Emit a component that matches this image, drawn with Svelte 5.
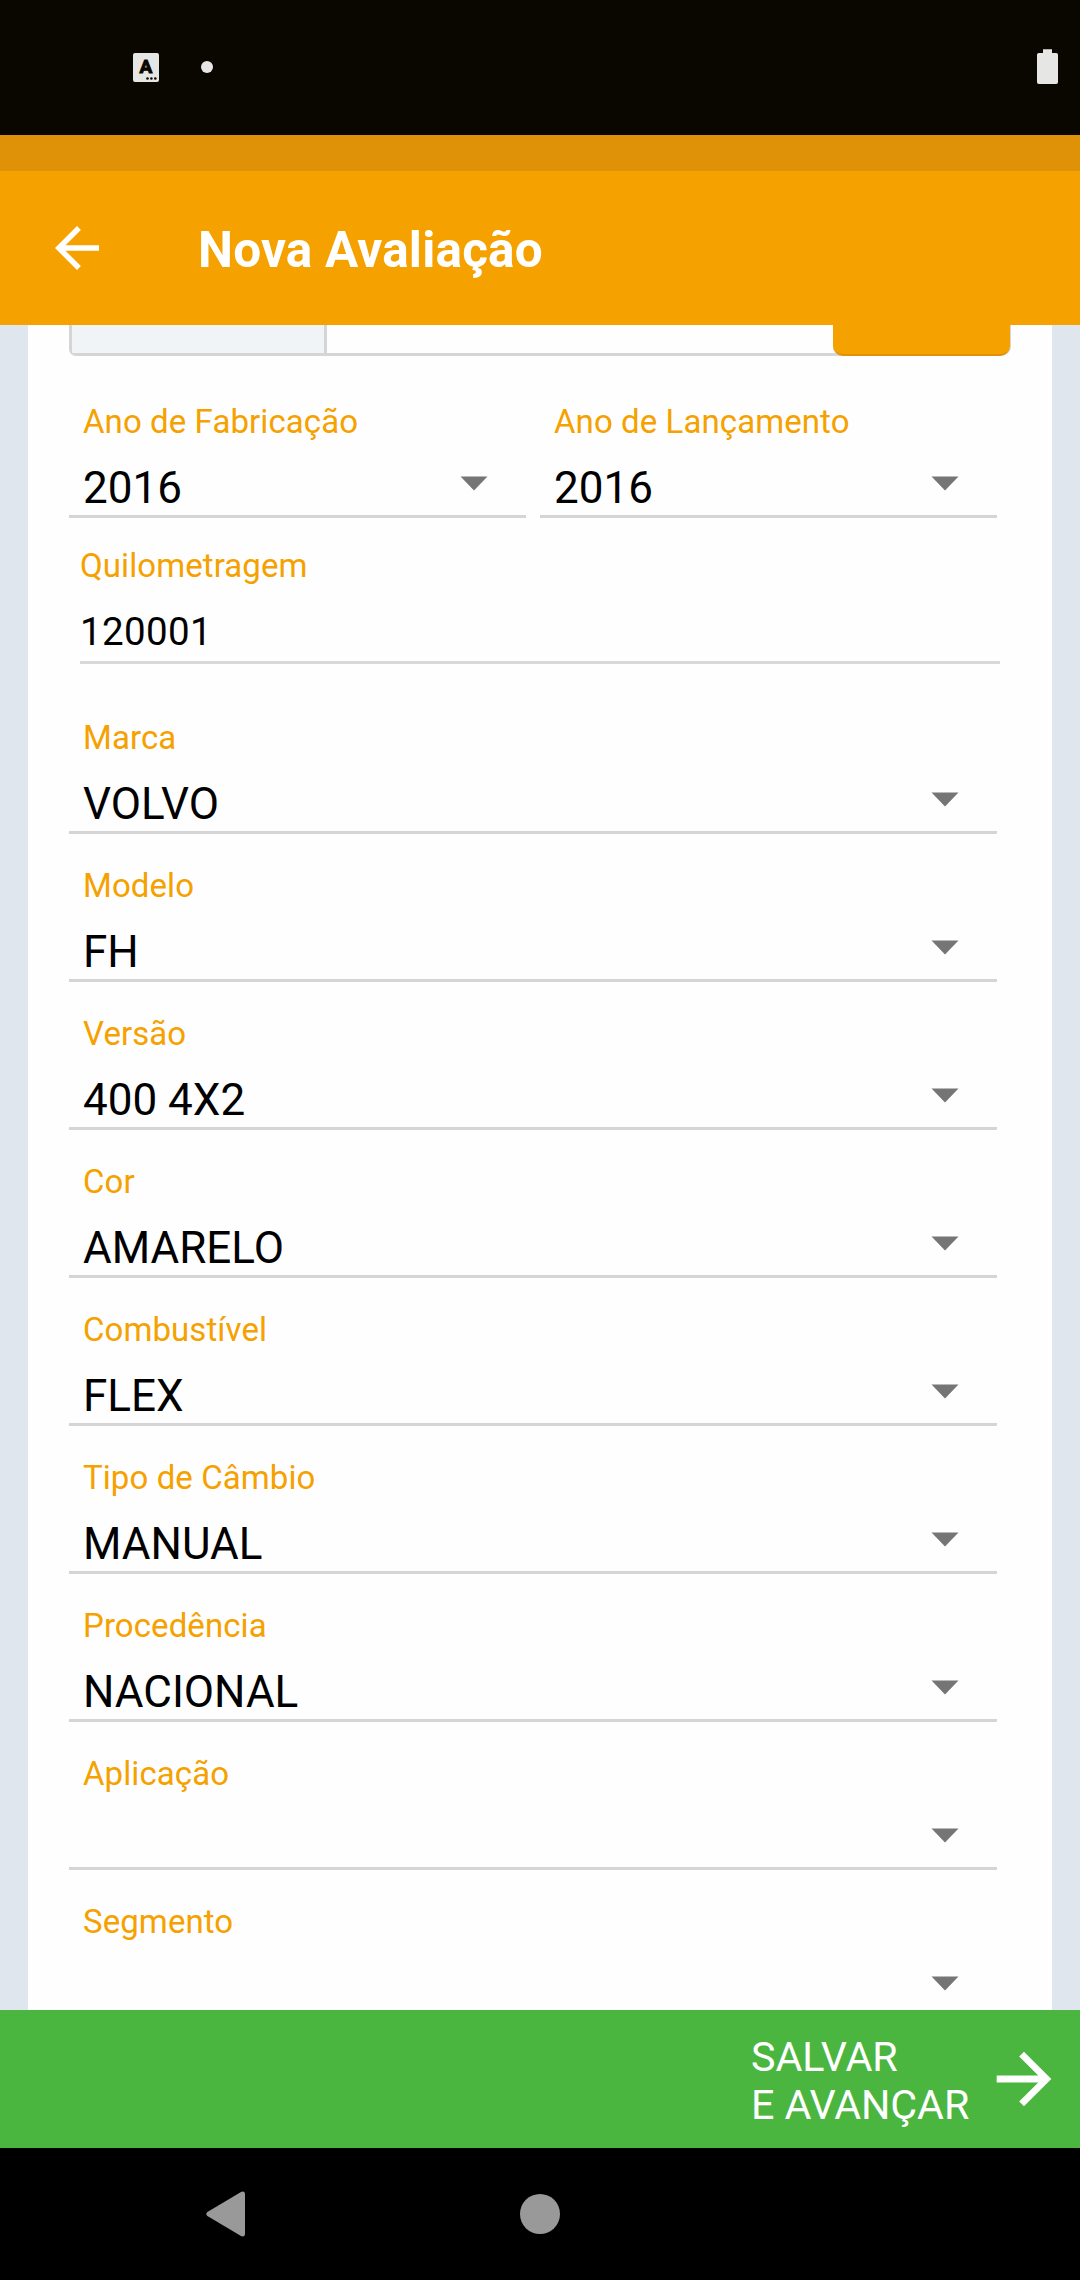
<script>
  const years = [
    { label: 'Ano de Fabricação', value: '2016' },
    { label: 'Ano de Lançamento', value: '2016' },
  ];
  const fields = [
    { label: 'Marca', value: 'VOLVO' },
    { label: 'Modelo', value: 'FH' },
    { label: 'Versão', value: '400 4X2' },
    { label: 'Cor', value: 'AMARELO' },
    { label: 'Combustível', value: 'FLEX' },
    { label: 'Tipo de Câmbio', value: 'MANUAL' },
    { label: 'Procedência', value: 'NACIONAL' },
    { label: 'Aplicação', value: '' },
    { label: 'Segmento', value: '' },
  ];
</script>

{#snippet select(field)}
  <div class="field">
    <div class="label">{field.label}</div>
    <div class="row">
      <span class="value">{field.value}</span>
      <svg class="caret" width="28" height="15" viewBox="0 0 28 15"><path d="M.5 .5h27L14 14.500z" fill="#757575" /></svg>
    </div>
  </div>
{/snippet}

<div class="screen">
  <div class="status">
    <div class="ime">
      <span class="letter">A</span>
      <svg class="dots" width="11" height="3" viewBox="0 0 11 3" fill="#0a0600">
        <circle cx="1.5" cy="1.5" r="1.3" /><circle cx="5.4" cy="1.5" r="1.3" /><circle cx="9.3" cy="1.5" r="1.3" />
      </svg>
    </div>
    <div class="more"></div>
    <svg class="battery" width="21" height="36" viewBox="0 0 21 36" fill="#e6e6e4">
      <path d="M6 .3h9V4h4.2Q21 4 21 5.8v27.400q0 1.800-1.800 1.800H1.800Q0 35 0 33.200V5.800Q0 4 1.800 4H6z" />
    </svg>
  </div>
  <div class="strip"></div>
  <header class="appbar">
    <svg width="66" height="66" viewBox="0 0 24 24" fill="#fff"><path d="M20 11H7.830l5.590-5.590L12 4l-8 8 8 8 1.410-1.410L7.830 13H20v-2z" /></svg>
    <h1>Nova Avaliação</h1>
  </header>

  <main class="content">
    <div class="card">
      <div class="group">
        <div class="prefix"></div>
        <div class="input"></div>
        <div class="action"></div>
      </div>
      <div class="pair">
        {#each years as field}{@render select(field)}{/each}
      </div>
      <div class="mileage">
        <div class="label">Quilometragem</div>
        <div class="number">120001</div>
      </div>
      {#each fields as field}{@render select(field)}{/each}
    </div>
  </main>

  <footer class="save">
    <div class="save-text">SALVAR<br />E AVANÇAR</div>
    <svg width="82" height="82" viewBox="0 0 24 24" fill="#fff"><path d="M12 4l-1.410 1.410L16.170 11H4v2h12.170l-5.580 5.590L12 20l8-8z" /></svg>
  </footer>
  <nav class="nav">
    <svg class="back" width="40" height="46" viewBox="0 0 40 46"><path d="M1.400 21 35 .9Q39 -.6 39 3.500v39Q39 46.600 35 45.100L1.400 25Q-.9 23 1.400 21z" fill="#999" /></svg>
    <div class="home"></div>
  </nav>
</div>

<style>
  :global(body) {
    margin: 0;
    background: #000;
  }
  .screen {
    width: 1080px;
    height: 2280px;
    display: flex;
    flex-direction: column;
    overflow: hidden;
    font-family: Roboto, sans-serif;
  }
  .status {
    height: 135px;
    flex: none;
    box-sizing: border-box;
    padding: 0 22px 1px 133px;
    display: flex;
    align-items: center;
    background: #0a0600;
  }
  .ime {
    position: relative;
    width: 26px;
    height: 29px;
    border-radius: 2px;
    background: #e6e6e4;
    text-align: center;
  }
  .letter {
    display: block;
    color: #0a0600;
    font-size: 19px;
    font-weight: 700;
    line-height: 28px;
    -webkit-text-stroke: 1px #0a0600;
  }
  .dots {
    position: absolute;
    right: 2px;
    bottom: 2px;
  }
  .more {
    width: 12px;
    height: 12px;
    margin-left: 42px;
    border-radius: 50%;
    background: #e6e6e4;
  }
  .battery {
    margin-left: auto;
  }
  .strip {
    height: 36px;
    flex: none;
    background: #df9107;
  }
  .appbar {
    height: 154px;
    flex: none;
    box-sizing: border-box;
    padding-left: 44px;
    display: flex;
    align-items: center;
    gap: 88px;
    background: #f5a100;
  }
  h1 {
    margin: 4px 0 0;
    color: #fff;
    font-size: 49.5px;
    font-weight: 700;
    line-height: 60px;
    letter-spacing: 0.2px;
  }
  .content {
    height: 1685px;
    flex: none;
    overflow: hidden;
    padding: 0 28px;
    background: #dfe6ed;
  }
  .card {
    box-sizing: border-box;
    padding: 0 41px;
    background: #fefefe;
  }
  .group {
    height: 31px;
    box-sizing: border-box;
    display: flex;
    margin-bottom: 14px;
    border: 3px solid #d5d5d5;
    border-width: 0 1px 3px 3px;
    border-radius: 0 0 10px 7px;
  }
  .prefix {
    width: 252px;
    border-right: 3px solid #d5d5d5;
    background: #f0f4f7;
  }
  .input {
    flex: 1;
  }
  .action {
    width: 177px;
    height: 31px;
    box-sizing: border-box;
    border-bottom: 2px solid #df9107;
    border-radius: 0 0 10px 10px;
    background: #f5a100;
  }
  .pair {
    display: grid;
    grid-template-columns: 457px 457px;
    gap: 14px;
  }
  .field {
    height: 148px;
    width: 928px;
    box-sizing: border-box;
    padding: 32px 38px 0 14px;
    border-bottom: 3px solid #d5d5d5;
  }
  .pair .field {
    width: auto;
  }
  .label {
    color: #f5a100;
    font-size: 33px;
    line-height: 40px;
    letter-spacing: 0.08px;
  }
  .row {
    height: 52px;
    margin-top: 20px;
    display: flex;
    justify-content: space-between;
  }
  .value {
    color: #000;
    font-size: 44px;
    line-height: 52px;
  }
  .caret {
    margin-top: 14px;
  }
  .mileage {
    height: 146px;
    width: 920px;
    margin: 0 0 22px 11px;
    box-sizing: border-box;
    padding-top: 28px;
    border-bottom: 3px solid #d8d8d8;
  }
  .number {
    margin-top: 23px;
    color: #000;
    font-size: 38.5px;
    line-height: 46px;
    letter-spacing: 0.35px;
  }
  .save {
    height: 138px;
    flex: none;
    box-sizing: border-box;
    padding: 0 15px 0 751px;
    display: flex;
    align-items: center;
    justify-content: space-between;
    background: #4ab53f;
  }
  .save-text {
    margin-top: 4px;
    color: #fff;
    font-size: 41.25px;
    line-height: 48px;
    letter-spacing: -0.1px;
  }
  .nav {
    flex: 1;
    display: flex;
    align-items: center;
    padding: 0 0 0 206px;
    background: #000;
  }
  .home {
    width: 40px;
    height: 46px;
    margin-left: 274px;
    display: flex;
  }
  .home::before {
    content: '';
    width: 40px;
    height: 40px;
    margin: auto;
    border-radius: 50%;
    background: #999;
  }
</style>
